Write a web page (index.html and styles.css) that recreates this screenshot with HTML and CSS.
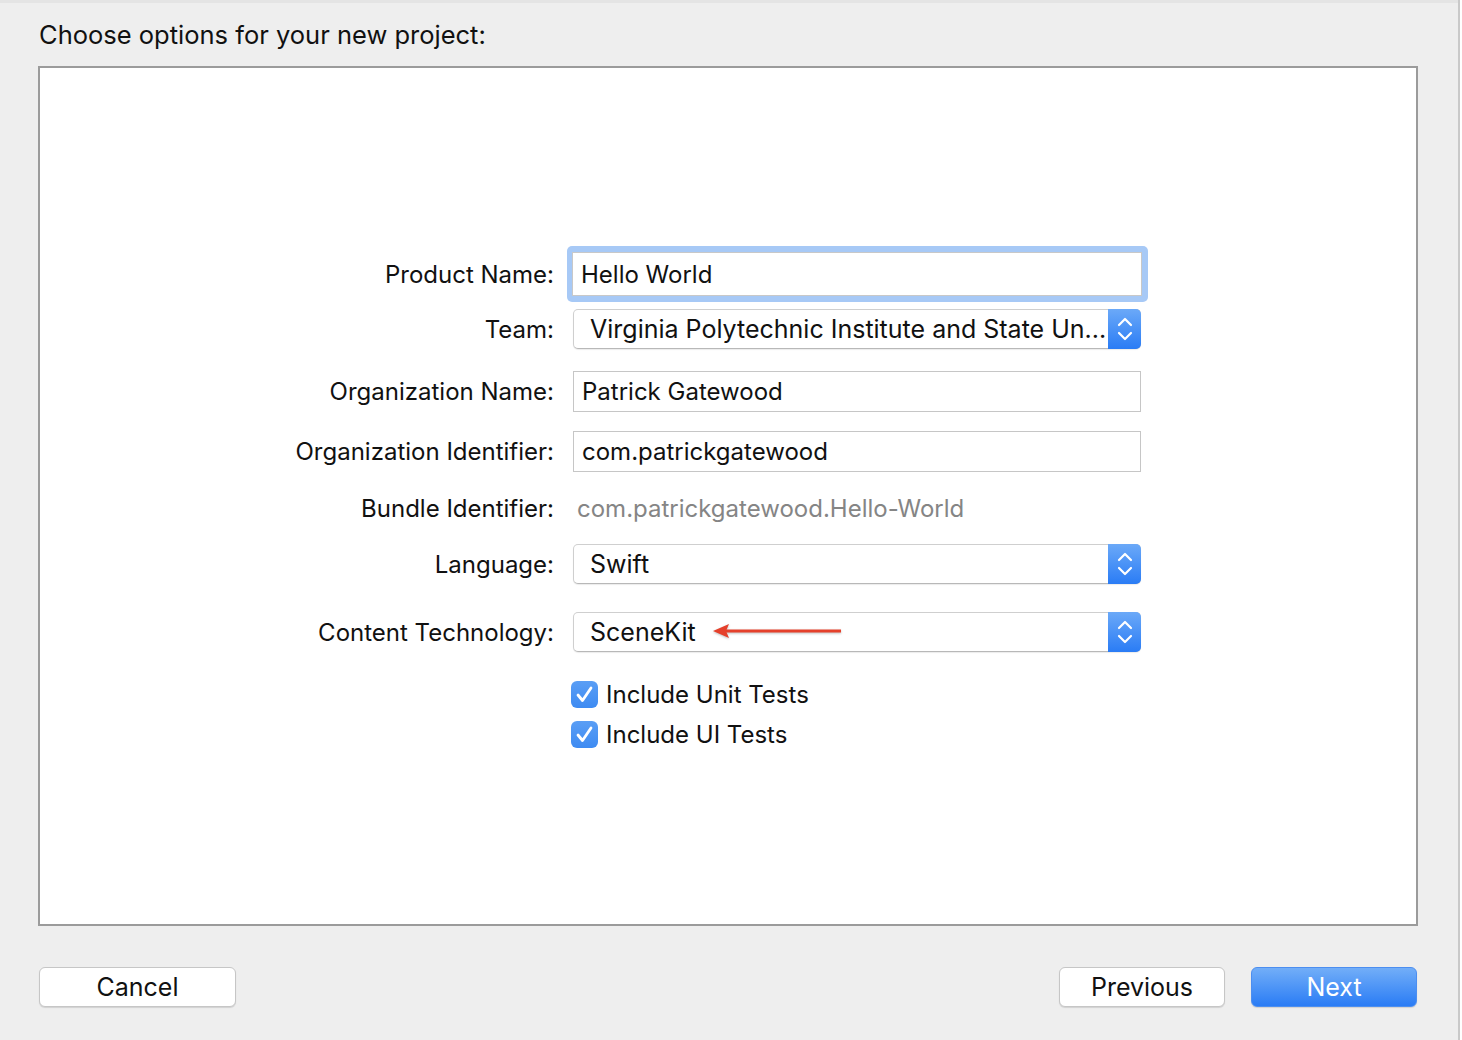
FILE: index.html
```html
<!DOCTYPE html>
<html>
<head>
<meta charset="utf-8">
<link rel="stylesheet" href="styles.css">
</head>
<body>
<div class="window">
  <div class="topband"></div>
  <div class="content">
    <h1 class="title">Choose options for your new project:</h1>
    <div class="panel">
      <div class="form">
        <div class="row row-product">
          <div class="label">Product Name:</div>
          <div class="field"><div class="focus"><div class="input">Hello World</div></div></div>
        </div>
        <div class="row row-team">
          <div class="label">Team:</div>
          <div class="field"><div class="popup"><span class="ptext">Virginia Polytechnic Institute and State Un...</span><span class="stepper"><svg width="18" height="28" viewBox="0 0 18 28"><path d="M3 10 L9 4 L15 10 M3 18 L9 24 L15 18" fill="none" stroke="#fff" stroke-width="2.2" stroke-linecap="round" stroke-linejoin="round"/></svg></span></div></div>
        </div>
        <div class="row row-orgname">
          <div class="label">Organization Name:</div>
          <div class="field"><div class="input plain">Patrick Gatewood</div></div>
        </div>
        <div class="row row-orgid">
          <div class="label">Organization Identifier:</div>
          <div class="field"><div class="input plain">com.patrickgatewood</div></div>
        </div>
        <div class="row row-bundle">
          <div class="label">Bundle Identifier:</div>
          <div class="field"><div class="bundle">com.patrickgatewood.Hello-World</div></div>
        </div>
        <div class="row row-lang">
          <div class="label">Language:</div>
          <div class="field"><div class="popup"><span class="ptext">Swift</span><span class="stepper"><svg width="18" height="28" viewBox="0 0 18 28"><path d="M3 10 L9 4 L15 10 M3 18 L9 24 L15 18" fill="none" stroke="#fff" stroke-width="2.2" stroke-linecap="round" stroke-linejoin="round"/></svg></span></div></div>
        </div>
        <div class="row row-tech">
          <div class="label">Content Technology:</div>
          <div class="field"><div class="popup"><span class="ptext">SceneKit</span><span class="stepper"><svg width="18" height="28" viewBox="0 0 18 28"><path d="M3 10 L9 4 L15 10 M3 18 L9 24 L15 18" fill="none" stroke="#fff" stroke-width="2.2" stroke-linecap="round" stroke-linejoin="round"/></svg></span>
            <svg class="arrow" width="132" height="18" viewBox="0 0 132 18"><path d="M10 8 L128 8" stroke="#e5402b" stroke-width="3"/><path d="M0 8 L16 1 L13 8 L16 15 Z" fill="#e5402b"/></svg>
          </div></div>
        </div>
        <div class="row row-check">
          <div class="label"></div>
          <div class="field"><label class="check"><span class="box"><svg width="27" height="27" viewBox="0 0 27 27"><path d="M7 14 L11.5 19.5 L20 7" fill="none" stroke="#fff" stroke-width="2.8" stroke-linecap="round" stroke-linejoin="round"/></svg></span><span>Include Unit Tests</span></label></div>
        </div>
        <div class="row row-check2">
          <div class="label"></div>
          <div class="field"><label class="check"><span class="box"><svg width="27" height="27" viewBox="0 0 27 27"><path d="M7 14 L11.5 19.5 L20 7" fill="none" stroke="#fff" stroke-width="2.8" stroke-linecap="round" stroke-linejoin="round"/></svg></span><span>Include UI Tests</span></label></div>
        </div>
      </div>
    </div>
    <div class="buttons">
      <button class="btn cancel">Cancel</button>
      <div class="spacer"></div>
      <button class="btn previous">Previous</button>
      <button class="btn next">Next</button>
    </div>
  </div>
</div>
</body>
</html>
```
FILE: styles.css
```css
html, body {
  margin: 0;
  padding: 0;
}
body {
  width: 1462px;
  height: 1040px;
  overflow: hidden;
  background: #ffffff;
  font-family: "Inter", "Roboto", sans-serif;
  color: #111;
}
.window {
  width: 1458px;
  height: 1040px;
  background: #eeeeee;
  border-right: 2px solid #c9c9c9;
}
.topband {
  height: 3px;
  background: #e4e4e4;
}
.content {
  padding: 0 40px 0 38px;
}
.title {
  margin: 0;
  padding: 17px 0 0 1px;
  height: 45px;
  box-sizing: border-box;
  font-size: 25.5px;
  font-weight: 400;
  line-height: 30px;
  color: #111;
}
.panel {
  margin-top: 18px;
  height: 860px;
  box-sizing: border-box;
  background: #fff;
  border: 2px solid #9b9b9b;
}
.form {
  padding-top: 178px;
  display: flex;
  flex-direction: column;
}
.row {
  display: grid;
  grid-template-columns: 514px 568px;
  column-gap: 19px;
  align-items: center;
}
.label {
  text-align: right;
  font-size: 24px;
  color: #111;
}
.row-product { height: 56px; }
.row-team { height: 40px; margin-top: 7px; }
.row-orgname { height: 41px; margin-top: 22px; }
.row-orgid { height: 41px; margin-top: 19px; }
.row-bundle { height: 40px; margin-top: 16px; }
.row-lang { height: 40px; margin-top: 16px; }
.row-tech { height: 40px; margin-top: 28px; }
.row-check { height: 27px; margin-top: 28px; }
.row-check2 { height: 27px; margin-top: 13px; }

.focus {
  margin: 0 -7px 0 -6px;
  height: 56px;
  box-sizing: border-box;
  padding: 6px 6px 6px 5px;
  border-radius: 5px;
  background: #a7c9f6;
}
.input {
  height: 44px;
  box-sizing: border-box;
  background: #fff;
  border: 1px solid #c8c8c8;
  padding: 0 8px;
  font-size: 24px;
  display: flex;
  align-items: center;
  color: #111;
}
.input.plain {
  height: 41px;
  border-color: #c6c6c6;
}
.bundle {
  font-size: 24px;
  color: #858585;
  padding-left: 4px;
}
.popup {
  height: 40px;
  box-sizing: border-box;
  background: #fff;
  border: 1px solid #cfcfcf;
  border-bottom-color: #b8b8b8;
  border-radius: 5px;
  box-shadow: 0 1px 1px rgba(0,0,0,0.08);
  display: flex;
  align-items: center;
  position: relative;
  font-size: 25px;
  color: #111;
}
.ptext {
  flex: 1;
  padding-left: 16px;
  white-space: nowrap;
}
.stepper {
  align-self: stretch;
  width: 33px;
  margin: -1px -1px -1px 0;
  border-radius: 0 5px 5px 0;
  background: linear-gradient(#6ba9f8, #2a7cf5);
  display: flex;
  align-items: center;
  justify-content: center;
}
.arrow {
  position: absolute;
  left: 139px;
  top: 10px;
  filter: drop-shadow(0 1px 1px rgba(0,0,0,0.25));
}
.check {
  display: flex;
  align-items: center;
  gap: 8px;
  font-size: 24px;
  color: #111;
  margin-left: -2px;
}
.box {
  width: 27px;
  height: 27px;
  border-radius: 6px;
  background: linear-gradient(#5a9ef5, #3e8bf2);
  display: flex;
}
.buttons {
  display: flex;
  margin-top: 41px;
  padding-left: 1px;
  align-items: center;
}
.spacer { flex: 1; }
.btn {
  height: 40px;
  box-sizing: border-box;
  border-radius: 6px;
  font-family: "Inter", "Roboto", sans-serif;
  font-size: 25px;
  padding: 0;
  color: #111;
  background: #fff;
  border: 1px solid #c6c6c6;
  box-shadow: 0 1px 1px rgba(0,0,0,0.12);
}
.cancel { width: 197px; }
.previous { width: 166px; margin-right: 26px; }
.next {
  width: 166px;
  margin-right: 1px;
  color: #fff;
  border: 1px solid #4c8ef0;
  background: linear-gradient(#72aef8, #2a7cf5);
}
```
